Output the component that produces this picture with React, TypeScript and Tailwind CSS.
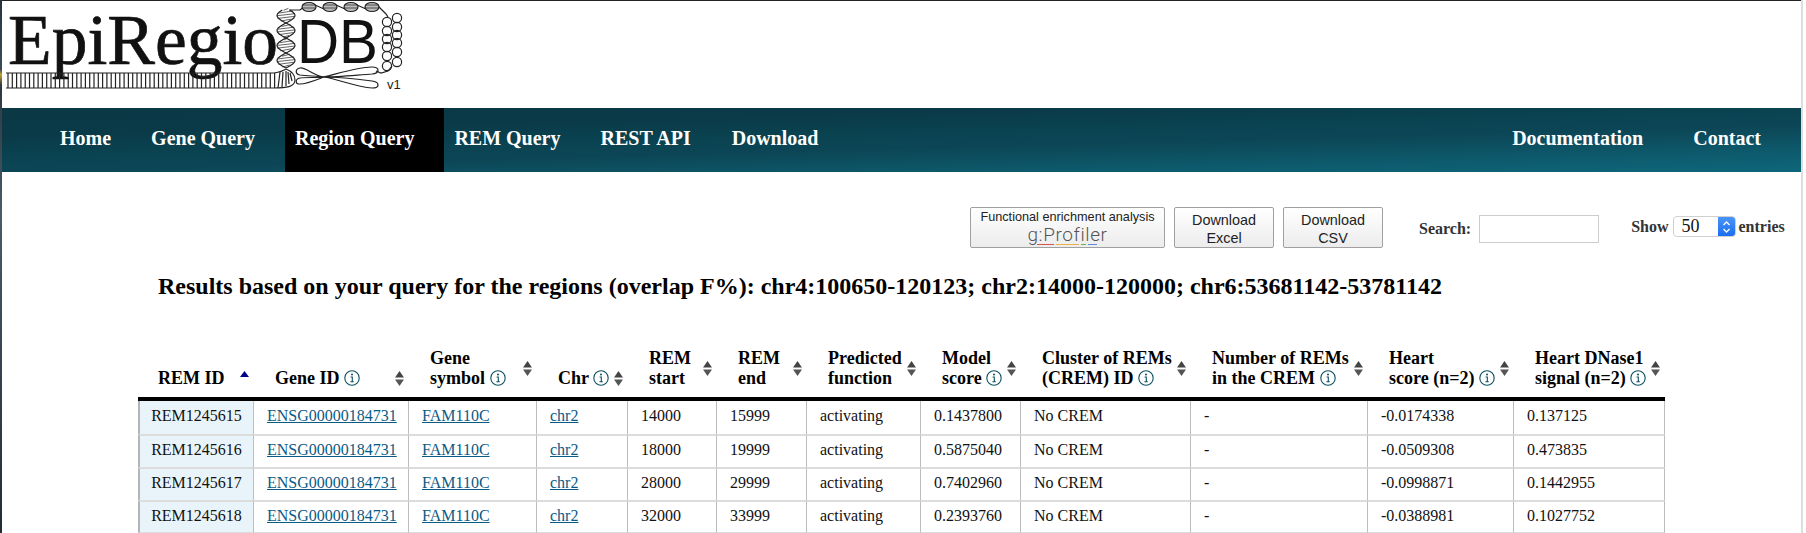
import React from "react";

const SERIF = "font-['Liberation_Serif','Times_New_Roman',serif]";
const SANS = "font-['Liberation_Sans',Arial,sans-serif]";

function Logo() {
  const ticks = Array.from({ length: 63 }, (_, i) => 6 + i * 4.3);
  const ys = Array.from({ length: 30 }, (_, i) => 68 - i * 2);
  const helix = (sign: number) =>
    ys.map((y, i) => `${i === 0 ? "M" : "L"}${(284 + sign * 9 * Math.sin(((y - 8) * 2 * Math.PI) / 30)).toFixed(1)} ${y}`).join(" ");
  const rungs = Array.from({ length: 22 }, (_, i) => 66 - i * 2.7);
  const nucs = [307, 328, 349, 370];
  const beads = [18, 27, 35, 43, 52, 62];
  return (
    <svg width="410" height="95" viewBox="0 1 410 95" className="block">
      <text x="6" y="64" fontFamily="Liberation Serif" fontSize="71" fill="#111" stroke="#111" strokeWidth="0.7" textLength="270" lengthAdjust="spacingAndGlyphs">EpiRegio</text>
      <text x="295" y="63" fontFamily="Liberation Sans" fontSize="63" fill="#111" textLength="81" lengthAdjust="spacingAndGlyphs">DB</text>
      <g fill="none" stroke="#222" strokeWidth="1.2">
        <path d="M4 73H272C278 72 281 71 284 69M4 88H272C284 88 293 87 293 80C293 75 289 71 284 69" />
        {ticks.map((x) => (
          <path key={x} d={`M${x} 73V88`} />
        ))}
        <path d="M276 88L278 72M280 87L281 72M284 86L284 71M287 84L286 72M290 81L288 73" />
        <path d={helix(1)} />
        <path d={helix(-1)} />
        {rungs.map((y, i) => {
          const w = 9 * Math.abs(Math.sin(((y - 8) * 2 * Math.PI) / 30));
          return w > 1.5 ? <path key={i} d={`M${284 - w} ${y + 1}L${284 + w} ${y - 1}`} strokeWidth="0.7" /> : null;
        })}
        <path d="M287 10L298 10L302 7M313 5L322 9M334 5L343 9M355 5L364 9M376 6L384 14L386 17" />
        {nucs.map((x) => (
          <g key={x}>
            <ellipse cx={x} cy="7" rx="7" ry="4.5" fill="#bbb" />
            <path d="M300 5H314M300 8H314" transform={`translate(${x - 307} 0)`} strokeWidth="0.7" />
          </g>
        ))}
        {beads.map((y) => (
          <g key={y}>
            <circle cx="385" cy={y + 4} r="4.6" />
            <circle cx="395" cy={y} r="4.6" />
          </g>
        ))}
        <path d="M390 66L386 71L379 73L374 71" />
        <path d="M322 77C312 76 304 67 298 68C293 69 293 74 298 75C305 76 314 76 322 77Z" />
        <path d="M322 77C314 78 304 77 298 78C293 79 293 84 298 84C305 84 314 80 322 77Z" />
        <path d="M322 77C335 74 355 67 370 67C378 67 378 73 370 74C355 75 335 77 322 77Z" />
        <path d="M322 77C335 77 355 79 370 81C378 82 378 88 370 88C355 87 335 79 322 77Z" />
      </g>
      <text x="385" y="89" fontFamily="Liberation Sans" fontSize="13" fill="#222">v1</text>
    </svg>
  );
}

function Info() {
  return (
    <svg width="16" height="16" viewBox="0 0 16 16" className="inline-block align-[-2px]">
      <circle cx="8" cy="8" r="7.2" fill="none" stroke="#0a4f60" strokeWidth="1.1" />
      <circle cx="8" cy="4.5" r="1" fill="#0a4f60" />
      <path d="M6.6 7H8.3V11.5M6.4 11.7H9.8" fill="none" stroke="#0a4f60" strokeWidth="1.1" />
    </svg>
  );
}

function Sort() {
  return (
    <svg width="9" height="15" viewBox="0 0 9 15" className="shrink-0">
      <path d="M4.5 0L9 6.5H0Z" fill="#444" />
      <path d="M0 8.5H9L4.5 15Z" fill="#555" />
    </svg>
  );
}

function SortAsc() {
  return (
    <svg width="9" height="15" viewBox="0 0 9 15" className="shrink-0">
      <path d="M4.5 0L9 6H0Z" fill="#00008b" />
    </svg>
  );
}

const headers: { w: string; first?: boolean; body: React.ReactNode }[] = [
  { w: "w-[116px]", first: true, body: <>REM ID</> },
  { w: "w-[155px]", body: <>Gene ID <Info /></> },
  { w: "w-[128px]", body: <>Gene<br />symbol <Info /></> },
  { w: "w-[91px]", body: <>Chr <Info /></> },
  { w: "w-[89px]", body: <>REM<br />start</> },
  { w: "w-[90px]", body: <>REM<br />end</> },
  { w: "w-[114px]", body: <>Predicted<br />function</> },
  { w: "w-[100px]", body: <>Model<br />score <Info /></> },
  { w: "w-[170px]", body: <>Cluster of REMs<br />(CREM) ID <Info /></> },
  { w: "w-[177px]", body: <>Number of REMs<br />in the CREM <Info /></> },
  { w: "w-[146px]", body: <>Heart<br />score (n=2) <Info /></> },
  { w: "w-[151px]", body: <>Heart DNase1<br />signal (n=2) <Info /></> },
];

const rows = [
  ["REM1245615", "14000", "15999", "0.1437800", "-0.0174338", "0.137125"],
  ["REM1245616", "18000", "19999", "0.5875040", "-0.0509308", "0.473835"],
  ["REM1245617", "28000", "29999", "0.7402960", "-0.0998871", "0.1442955"],
  ["REM1245618", "32000", "33999", "0.2393760", "-0.0388981", "0.1027752"],
];

const btn =
  "flex flex-col items-center justify-center h-[41px] rounded-[2px] border border-[#a0a0a0] bg-[linear-gradient(to_bottom,#ffffff,#ececec)] text-[#222] " + SANS;

function Td({ children, className = "" }: { children: React.ReactNode; className?: string }) {
  return <td className={"pl-[13px] pb-[3px] border-r border-[#bdbdbd] align-middle " + className}>{children}</td>;
}

const linkCls = "text-[#0b5a86] underline";

export default function App() {
  return (
    <div className={"h-[533px] w-full overflow-hidden bg-white flex " + SERIF}>
      <div className="w-[2px] shrink-0 bg-[linear-gradient(to_bottom,#27343e_0%,#3a4a58_13%,#c2a12c_14%,#2d3842_16%,#4a5a68_40%,#222c34_100%)]" />
      <div className="w-[1799px] shrink-0 flex flex-col border-t border-[#222]">
        <header className="h-[107px] shrink-0">
          <Logo />
        </header>
        <nav className="h-[64px] shrink-0 flex items-center justify-between pl-[58px] pr-[40px] pb-[5px] text-white font-bold text-[20px] bg-[linear-gradient(178.5deg,#0a3845_0%,#0a3a48_25%,#0a4250_42%,#0c4656_58%,#0d5a6c_81%,#0e667a_100%)]">
          <ul className="flex gap-[40px] items-center h-full">
            <li>Home</li>
            <li>Gene Query</li>
            <li className="bg-black h-[64px] -mb-[5px] flex items-center pb-[5px] -ml-[10px] pl-[10px] pr-[30px] -mr-[30px]">Region Query</li>
            <li>REM Query</li>
            <li>REST API</li>
            <li className="ml-[1px]">Download</li>
          </ul>
          <ul className="flex gap-[50px] items-center">
            <li>Documentation</li>
            <li>Contact</li>
          </ul>
        </nav>

        <div className="h-[35px] shrink-0" />
        <div className="flex items-start h-[41px] pl-[968px] shrink-0">
          <button className={btn + " w-[195px] text-[12.7px] leading-[15px]"}>
            <span>Functional enrichment analysis</span>
            <span className="flex flex-col items-center font-['Roboto',sans-serif] font-light text-[19px] leading-[20px] tracking-[0.6px] text-[#555] ">
              g:Profiler
              <span className="flex gap-[2px] h-[1px] -mt-[1px]">
                <span className="w-[17px] bg-[#d9534a]" />
                <span className="w-[23px] bg-[#eeb04e]" />
                <span className="w-[5px] bg-[#6ab04c]" />
                <span className="w-[9px] bg-[#5b8bd9]" />
              </span>
            </span>
          </button>
          <button className={btn + " w-[100px] ml-[9px] text-[14.4px] leading-[18px] pt-[2px]"}>
            <span>Download</span>
            <span>Excel</span>
          </button>
          <button className={btn + " w-[100px] ml-[9px] text-[14.4px] leading-[18px] pt-[2px]"}>
            <span>Download</span>
            <span>CSV</span>
          </button>
          <label className="ml-[36px] mt-[8px] h-[28px] flex items-center font-bold text-[16px] text-[#333]">
            Search:
            <span className="ml-[8px] w-[120px] h-[28px] border border-[#ccc] bg-white block" />
          </label>
          <div className="ml-[32px] mt-[9px] flex items-center font-bold text-[16px] text-[#333] h-[21px]">
            <span>Show</span>
            <span className="ml-[4px] w-[63px] h-[21px] flex rounded-[4px] border border-[#d0d0d0] bg-white overflow-hidden">
              <span className="flex-1 pl-[8px] text-[18px] leading-[19px] font-normal text-[#111]">50</span>
              <span className="w-[17px] bg-[linear-gradient(to_bottom,#4a94f8,#1b6ef0)] flex items-center justify-center">
                <svg width="9" height="14" viewBox="0 0 9 14">
                  <path d="M1.5 5L4.5 2L7.5 5M1.5 9L4.5 12L7.5 9" fill="none" stroke="#fff" strokeWidth="1.3" />
                </svg>
              </span>
            </span>
            <span className="ml-[3px]">entries</span>
          </div>
        </div>

        <h1 className="ml-[156px] mt-[24px] text-[24px] leading-[28px] font-bold text-black whitespace-nowrap shrink-0">
          Results based on your query for the regions (overlap F%): chr4:100650-120123; chr2:14000-120000; chr6:53681142-53781142
        </h1>

        <table className="ml-[136px] mt-[44px] w-[1527px] table-fixed border-separate border-spacing-0 text-[16px] text-[#111] shrink-0">
          <thead>
            <tr>
              {headers.map((h, i) => (
                <th
                  key={i}
                  className={
                    h.w +
                    " h-[57px] border-b-[4px] border-black text-left font-bold text-[18px] leading-[20px] text-black align-bottom pb-[9px] pr-[5px] " +
                    (h.first ? "pl-[20px]" : "pl-[21px]")
                  }
                >
                  <div className="flex items-center justify-between">
                    <span>{h.body}</span>
                    {h.first ? <SortAsc /> : <Sort />}
                  </div>
                </th>
              ))}
            </tr>
          </thead>
          <tbody>
            {rows.map((r, i) => {
              const line = (i > 0 ? "border-t-2 border-t-[#dcdcdc] " : "") + (i === 3 ? "border-b border-b-[#dcdcdc] " : "");
              return (
                <tr key={r[0]} className="h-[33px]">
                  <td className={line + "h-[33px] pb-[3px] text-center bg-[#e9f4fa] border-l-2 border-l-[#b5b5b5] border-r border-r-[#bdbdbd]"}>{r[0]}</td>
                  <Td className={line}><a className={linkCls}>ENSG00000184731</a></Td>
                  <Td className={line}><a className={linkCls}>FAM110C</a></Td>
                  <Td className={line}><a className={linkCls}>chr2</a></Td>
                  <Td className={line}>{r[1]}</Td>
                  <Td className={line}>{r[2]}</Td>
                  <Td className={line}>activating</Td>
                  <Td className={line}>{r[3]}</Td>
                  <Td className={line}>No CREM</Td>
                  <Td className={line}>-</Td>
                  <Td className={line}>{r[4]}</Td>
                  <Td className={line}>{r[5]}</Td>
                </tr>
              );
            })}
          </tbody>
        </table>
      </div>
      <div className="w-[2px] shrink-0 bg-[#dedede]" />
    </div>
  );
}
